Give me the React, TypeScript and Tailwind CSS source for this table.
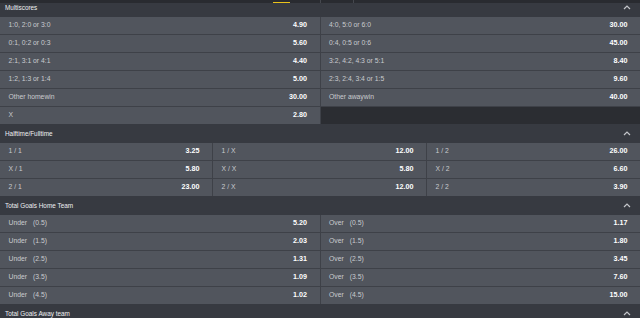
const multiscores: [string, string][] = [
  ['1:0, 2:0 or 3:0', '4.90'],
  ['4:0, 5:0 or 6:0', '30.00'],
  ['0:1, 0:2 or 0:3', '5.60'],
  ['0:4, 0:5 or 0:6', '45.00'],
  ['2:1, 3:1 or 4:1', '4.40'],
  ['3:2, 4:2, 4:3 or 5:1', '8.40'],
  ['1:2, 1:3 or 1:4', '5.00'],
  ['2:3, 2:4, 3:4 or 1:5', '9.60'],
  ['Other homewin', '30.00'],
  ['Other awaywin', '40.00'],
  ['X', '2.80'],
];

const halftime: [string, string][] = [
  ['1 / 1', '3.25'],
  ['1 / X', '12.00'],
  ['1 / 2', '26.00'],
  ['X / 1', '5.80'],
  ['X / X', '5.80'],
  ['X / 2', '6.60'],
  ['2 / 1', '23.00'],
  ['2 / X', '12.00'],
  ['2 / 2', '3.90'],
];

const goalsHome: [string, string, string][] = [
  ['Under', '(0.5)', '5.20'],
  ['Over', '(0.5)', '1.17'],
  ['Under', '(1.5)', '2.03'],
  ['Over', '(1.5)', '1.80'],
  ['Under', '(2.5)', '1.31'],
  ['Over', '(2.5)', '3.45'],
  ['Under', '(3.5)', '1.09'],
  ['Over', '(3.5)', '7.60'],
  ['Under', '(4.5)', '1.02'],
  ['Over', '(4.5)', '15.00'],
];

function Chevron() {
  return (
    <svg width="8" height="5" viewBox="0 0 8 5" className="text-[#c4c6ca]">
      <path d="M1 4 L4 1 L7 4" fill="none" stroke="currentColor" strokeWidth="1.2" />
    </svg>
  );
}

function Header({ title, className = 'h-[19px]' }: { title: string; className?: string }) {
  return (
    <div className={`flex items-center justify-between bg-[#373a41] pl-[5px] pr-[9px] ${className}`}>
      <span className="text-[6.4px] text-[#eef0f2]">{title}</span>
      <Chevron />
    </div>
  );
}

function Cell({ label, extra, odds }: { label: string; extra?: string; odds: string }) {
  return (
    <div className="flex h-[17px] items-center justify-between bg-[#51555d] pl-[8.5px] pr-[12.5px]">
      <span className="text-[6.8px] text-[#c9cbcf]">
        {label}
        {extra && <span className="ml-[6px]">{extra}</span>}
      </span>
      <span className="text-[7.2px] font-bold text-white">{odds}</span>
    </div>
  );
}

export default function App() {
  return (
    <div className="h-[318px] w-[640px] overflow-hidden bg-[#2b2d32] font-['Liberation_Sans',Arial,sans-serif]">
      {/* tab strip bottom edge */}
      <div className="flex h-[3px] bg-[#292b30]">
        <div className="w-[273px]" />
        <div className="flex w-[17px] flex-col justify-end">
          <div className="h-[1.5px] bg-[#e9c21b]" />
        </div>
        <div className="w-[30px]" />
        <div className="w-px bg-[#45484e]" />
        <div className="w-[32px]" />
        <div className="w-px bg-[#45484e]" />
      </div>

      {/* Multiscores */}
      <Header title="Multiscores" className="h-[14px] pb-[5px]" />
      <div className="grid grid-cols-2 gap-px bg-[#3e4148]">
        {multiscores.map(([l, o], i) => (
          <Cell key={i} label={l} odds={o} />
        ))}
        <div className="bg-[#2b2d32]" />
      </div>

      {/* Halftime/Fulltime */}
      <Header title="Halftime/Fulltime" />
      <div className="grid grid-cols-[212px_213px_213px] gap-px bg-[#3e4148]">
        {halftime.map(([l, o], i) => (
          <Cell key={i} label={l} odds={o} />
        ))}
      </div>

      {/* Total Goals Home Team */}
      <Header title="Total Goals Home Team" />
      <div className="grid grid-cols-2 gap-px bg-[#3e4148]">
        {goalsHome.map(([l, e, o], i) => (
          <Cell key={i} label={l} extra={e} odds={o} />
        ))}
      </div>

      <Header title="Total Goals Away team" />
    </div>
  );
}
